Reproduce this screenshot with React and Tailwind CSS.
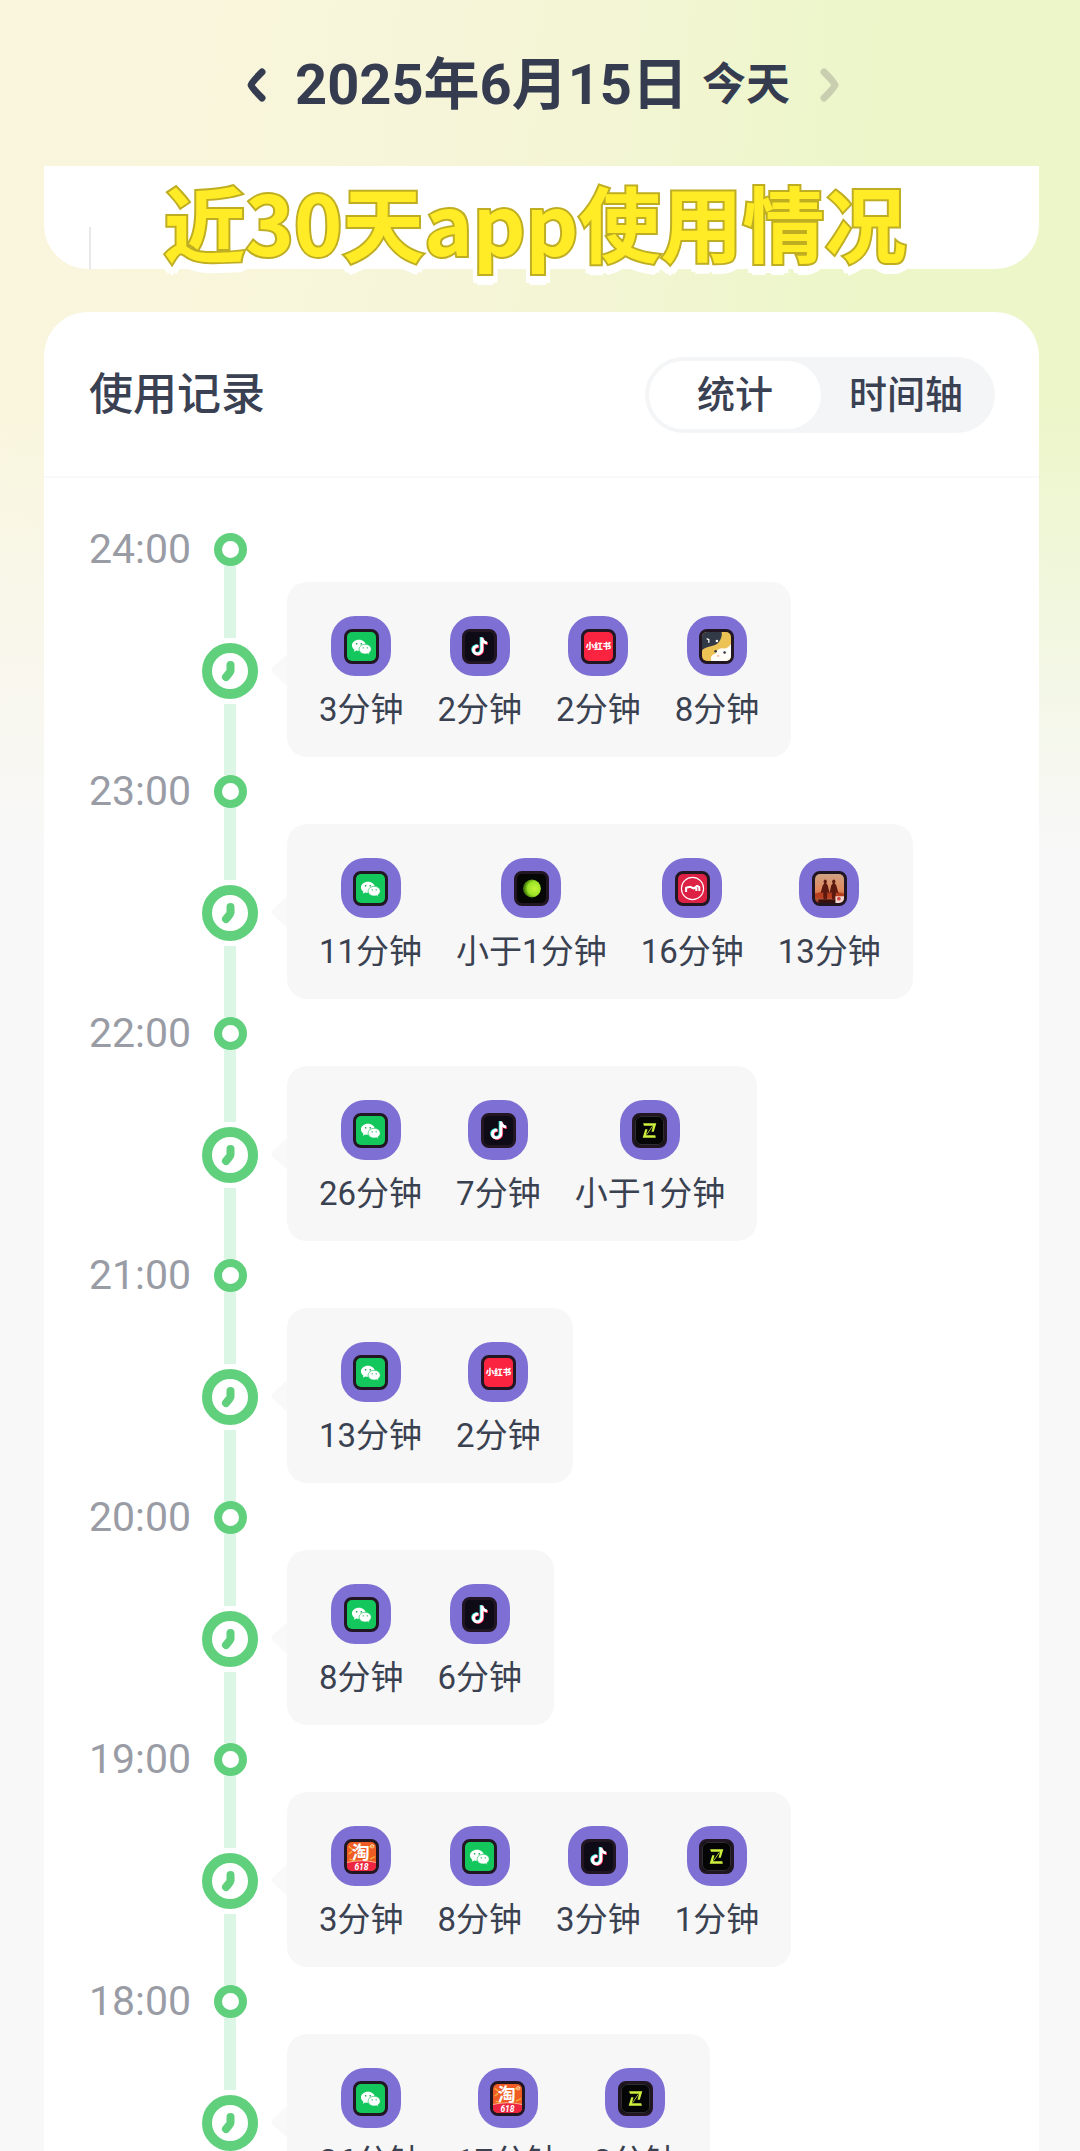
import React, { useState } from 'react';

const timeline = [
    { hour: '24:00', apps: [['wechat', '3分钟'], ['douyin', '2分钟'], ['xhs', '2分钟'], ['cats', '8分钟']] },
    { hour: '23:00', apps: [['wechat', '11分钟'], ['glow', '小于1分钟'], ['mask', '16分钟'], ['photo', '13分钟']] },
    { hour: '22:00', apps: [['wechat', '26分钟'], ['douyin', '7分钟'], ['zed', '小于1分钟']] },
    { hour: '21:00', apps: [['wechat', '13分钟'], ['xhs', '2分钟']] },
    { hour: '20:00', apps: [['wechat', '8分钟'], ['douyin', '6分钟']] },
    { hour: '19:00', apps: [['taobao', '3分钟'], ['wechat', '8分钟'], ['douyin', '3分钟'], ['zed', '1分钟']] },
    { hour: '18:00', apps: [['wechat', '26分钟'], ['taobao', '17分钟'], ['zed', '2分钟']] },
];

const NOTE = 'M18.2 6.5h3.2c.3 2.8 1.9 4.5 4.6 4.7v3.3c-1.7 0-3.2-.5-4.5-1.5v7.2c0 4.2-2.9 7.1-6.7 7.1-3.7 0-6.5-2.7-6.5-6.2 0-3.9 3.3-6.7 7.3-6.2v3.4c-2.2-.5-3.9.8-3.9 2.7 0 1.7 1.3 2.9 3 2.9 2.1 0 3.5-1.4 3.5-3.8z';

// 各应用图标,画布 34×34
const glyphs = {
    wechat: (
        <g>
            <rect width="34" height="34" fill="#14c75c" />
            <path d="M14 9c-4.6 0-8.2 2.9-8.2 6.6 0 2.1 1.1 3.9 2.9 5.1L8 23.2l3-1.5c1 .3 2 .4 3 .4 4.6 0 8.2-2.9 8.2-6.5S18.6 9 14 9z" fill="#fff" />
            <path d="M21.3 14.5c-4 0-7.1 2.5-7.1 5.6s3.1 5.7 7.1 5.7c.9 0 1.8-.1 2.6-.4l2.4 1.3-.6-2.2c1.6-1 2.7-2.6 2.7-4.4 0-3.1-3.1-5.6-7.1-5.6z" fill="#fff" stroke="#14c75c" strokeWidth=".8" />
            <g fill="#14a34f">
                <circle cx="11.3" cy="13.8" r="1" />
                <circle cx="16.7" cy="13.8" r="1" />
                <circle cx="19" cy="18.6" r=".8" />
                <circle cx="23.7" cy="18.6" r=".8" />
            </g>
        </g>
    ),
    douyin: (
        <g>
            <rect width="34" height="34" fill="#0e0b17" />
            <path d={NOTE} fill="#28e5e0" transform="translate(-1 -.6)" />
            <path d={NOTE} fill="#fb2c55" transform="translate(.9 .7)" />
            <path d={NOTE} fill="#fff" />
        </g>
    ),
    xhs: (
        <g>
            <rect width="34" height="34" fill="#fb2440" />
            <text x="17" y="20.5" textAnchor="middle" fontSize="10" fontWeight="900" fill="#fff">小红书</text>
        </g>
    ),
    cats: (
        <g>
            <rect width="34" height="34" fill="#ecc255" />
            <path d="M0 0h23c1 5-1 9-4 13-4 3-9 4-13 5-3 1-5 2-6 4z" fill="#323947" />
            <path d="M34 14v20H11c-2-5 1-7 5-9 1-5 5-6 9-6 3 1 6-1 9-5z" fill="#fffdf8" />
            <path d="M6 8l2 1v3" fill="none" stroke="#fff" strokeWidth="1.5" strokeLinecap="round" />
            <circle cx="17.5" cy="10.5" r="1.5" fill="#fff" />
            <circle cx="16" cy="22.5" r="1.5" fill="#30343f" />
            <circle cx="26.5" cy="24" r="1.5" fill="#30343f" />
            <circle cx="19" cy="28" r="1.3" fill="#f4b9a8" />
        </g>
    ),
    glow: (
        <g>
            <defs>
                <radialGradient id="glow" cx=".65" cy=".5" r=".6">
                    <stop offset="0" stopColor="#c4f53a" />
                    <stop offset=".65" stopColor="#9be325" />
                    <stop offset="1" stopColor="#3c7507" />
                </radialGradient>
            </defs>
            <rect width="34" height="34" fill="#050705" />
            <circle cx="17.5" cy="17" r="10.5" fill="url(#glow)" />
        </g>
    ),
    mask: (
        <g fill="none" stroke="#fff">
            <rect width="34" height="34" fill="#dc2145" stroke="none" />
            <circle cx="17" cy="17" r="13" strokeWidth="1.3" />
            <path d="M9.5 21v-5l5-1 4 2 4-3 2.5 1.5V20M21.500 16v4" strokeWidth="2.4" strokeLinejoin="round" />
        </g>
    ),
    photo: (
        <g>
            <defs>
                <linearGradient id="dusk" x1="0" y1="0" x2="0" y2="1">
                    <stop offset="0" stopColor="#cfa184" />
                    <stop offset=".55" stopColor="#e2895c" />
                    <stop offset="1" stopColor="#9c3521" />
                </linearGradient>
            </defs>
            <rect width="34" height="34" fill="url(#dusk)" />
            <path d="M0 23l8-2 9 1 9-1 8 2v5H0z" fill="#b8401f" />
            <path d="M4 30h26v4H4z" fill="#35100d" />
            <path d="M11 10.5a2 2 0 1 1 2 0l2 3 2 9-2.5-1-.5 8h-4l-.5-8-3 1 2.5-9zM21 10.5a2 2 0 1 1 2 0l2 3 2.5 9-3-1-.5 8h-4l-.5-8-2.5 1 2-9z" fill="#5b190f" />
            <path d="M24 26h10v8H24z" fill="#f3d9d2" />
            <circle cx="28" cy="29" r="2.2" fill="#d34a48" />
        </g>
    ),
    zed: (
        <g>
            <rect width="34" height="34" fill="#050505" />
            <rect x=".5" y=".5" width="33" height="33" rx="7" fill="none" stroke="#39393c" />
            <path d="M9.5 8.5H25l-3 10h-2.7l2-7H10.500zM24.500 25.500H9l3-10h2.700l-2 7h11z" fill="#cdf03e" />
            <path d="M20.500 12L13.500 22" stroke="#cdf03e" strokeWidth="1" />
        </g>
    ),
    taobao: (
        <g>
            <rect width="34" height="34" fill="#ee5b23" />
            <path d="M2 5l5 4M2 14l4-3M26 6l6-2M27 20l6-3M3 20l6 2" stroke="#f9b13c" strokeWidth="1.5" />
            <path d="M0 24q17-4 34 0v10H0z" fill="#ee2540" />
            <path d="M0 24q17-4 34 0" fill="none" stroke="#ffc79c" />
            <circle cx="29.5" cy="5" r="2" fill="none" stroke="#ffe2c0" />
            <text x="16" y="20.5" textAnchor="middle" fontSize="21" fontWeight="700" fill="#fff">淘</text>
            <text x="17" y="32.5" textAnchor="middle" fontSize="10" fontStyle="italic" fontWeight="700" fill="#fff">618</text>
        </g>
    ),
};

function AppIcon({ name }) {
    return (
        <span className="flex size-[60px] items-center justify-center rounded-3xl bg-[#7d6fd3]">
            <svg viewBox="0 0 34 34" className="size-[35px] rounded-lg border-3 border-[#211622] bg-[#211622]" aria-hidden="true">
                {glyphs[name]}
            </svg>
        </span>
    );
}

function HourRow({ hour, apps }) {
    return (
        <li className="flex h-[242px] shrink-0">
            <time className="w-[113px] text-[41px] leading-[32px] text-[#999ca5]">{hour}</time>
            <div className="flex w-14 flex-col items-center">
                <span className="size-[33px] rounded-full border-8 border-[#60d07d]" />
                <span className="w-3 flex-1 bg-[#dcf6e5]" />
                <svg viewBox="0 0 56 56" className="my-[5px] size-14" fill="none" stroke="#60d07d" aria-hidden="true">
                    <circle cx="28" cy="28" r="23" strokeWidth="10" />
                    <path d="M28.5 22v6q0 1-4.5 6" strokeWidth="8" strokeLinecap="round" strokeLinejoin="round" />
                </svg>
                <span className="w-3 flex-1 bg-[#dcf6e5]" />
            </div>
            <div className="mt-[49px] flex self-start">
                <svg viewBox="0 0 16 32" className="mt-[72px] ml-[13px] h-8 w-4" aria-hidden="true">
                    <path d="M16 0v32L2 19q-3-3 0-6z" fill="#f9f9f9" />
                </svg>
                <ul className="flex gap-[34px] rounded-[20px] bg-[#f7f7f7] px-8 pt-[34px] pb-[23px]">
                    {apps.map(([name, label]) => (
                        <li key={name} className="flex flex-col items-center gap-[10px]">
                            <AppIcon name={name} />
                            <span className="text-[33px] leading-[48px] whitespace-nowrap text-[#3a4150]">{label}</span>
                        </li>
                    ))}
                </ul>
            </div>
        </li>
    );
}

export default function App() {
    const [tab, setTab] = useState('统计');

    return (
        <main className="flex h-screen flex-col overflow-hidden bg-[#f8f8f8] bg-[linear-gradient(180deg,transparent_0,transparent_400px,#f8f8f8_850px),linear-gradient(95deg,#faf6de_0%,#f6f5d8_40%,#ecf6c9_70%,#ecf6c8_100%)] font-[Roboto,'Noto_Sans_CJK_SC',sans-serif]">
            <header className="flex h-[166px] shrink-0 items-center justify-center pt-1 pl-[6px] text-[#353c50]">
                <button type="button" aria-label="前一天" className="mr-[29px]">
                    <svg viewBox="0 0 20 36" className="h-9 w-5" fill="none" stroke="#353c50" strokeWidth="7" strokeLinecap="round" strokeLinejoin="round">
                        <path d="M16 5Q5 16 5 18t11 13" />
                    </svg>
                </button>
                <h1 className="text-[56px] leading-[72px] font-bold">2025年6月15日</h1>
                <span className="ml-[14px] text-[44px] leading-[72px] font-bold">今天</span>
                <button type="button" aria-label="后一天" className="ml-[30px]">
                    <svg viewBox="0 0 20 36" className="h-9 w-5" fill="none" stroke="#c9ceb0" strokeWidth="7" strokeLinecap="round" strokeLinejoin="round">
                        <path d="M4 5q11 11 11 13T4 31" />
                    </svg>
                </button>
            </header>

            <section className="mr-[41px] ml-11 flex h-[103px] shrink-0 items-end rounded-b-[44px] bg-white pl-[45px]">
                <span className="h-[42px] w-[2px] bg-[#e8e8ea]" />
                <h2 className="flex-1 pr-[60px] text-center font-['Noto_Sans_CJK_SC',sans-serif] text-[82px] leading-[96px] font-bold whitespace-nowrap text-[#ffec27] [filter:drop-shadow(0_5px_0_#fff)_drop-shadow(4px_2px_0_#fff)_drop-shadow(-4px_2px_0_#fff)] [paint-order:stroke_fill] [-webkit-text-stroke:4px_#bfae22]">
                    近30天app使用情况
                </h2>
            </section>

            <section className="mt-[43px] mr-[41px] ml-11 flex-1 rounded-t-[44px] bg-white">
                <div className="flex h-[166px] items-center justify-between border-b-2 border-[#f9f9fa] pt-[2px] pr-11 pl-[45px]">
                    <h2 className="text-[44px] leading-[60px] font-medium text-[#3a4152]">使用记录</h2>
                    <div className="flex h-[76px] rounded-full bg-[#f4f5f7] p-1 text-[38px] font-medium text-[#3a4152]">
                        {['统计', '时间轴'].map((name) => (
                            <button
                                key={name}
                                type="button"
                                onClick={() => setTab(name)}
                                className={`rounded-full first:px-12 last:px-7 ${tab === name ? 'bg-white' : ''}`}
                            >
                                {name}
                            </button>
                        ))}
                    </div>
                </div>
                <ol className="flex flex-col pt-[55px] pl-[45px]">
                    {timeline.map((row) => (
                        <HourRow key={row.hour} {...row} />
                    ))}
                </ol>
            </section>
        </main>
    );
}
